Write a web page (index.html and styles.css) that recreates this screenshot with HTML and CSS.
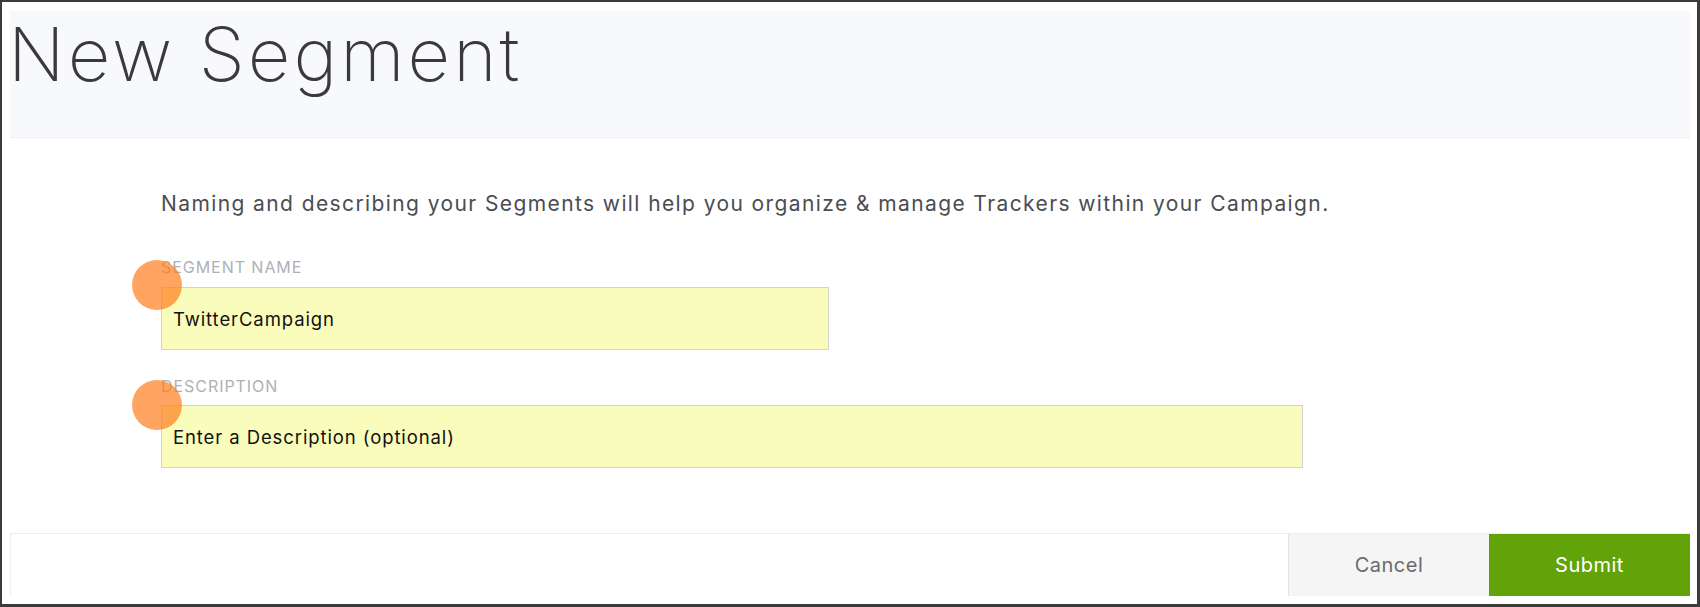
FILE: index.html
```html
<!DOCTYPE html>
<html lang="en">
<head>
<meta charset="utf-8">
<title>New Segment</title>
<link rel="stylesheet" href="styles.css">
</head>
<body>
<div class="frame">
  <header class="page-header">
    <h1 class="title">New Segment</h1>
  </header>
  <main class="content">
    <p class="intro">Naming and describing your Segments will help you organize &amp; manage Trackers within your Campaign.</p>
    <div class="field field-name">
      <label class="field-label" for="seg-name">SEGMENT NAME</label>
      <input class="field-input" id="seg-name" type="text" value="TwitterCampaign">
      <span class="marker"></span>
    </div>
    <div class="field field-desc">
      <label class="field-label" for="seg-desc">DESCRIPTION</label>
      <input class="field-input wide" id="seg-desc" type="text" value="Enter a Description (optional)">
      <span class="marker"></span>
    </div>
  </main>
  <footer class="page-footer">
    <button class="btn btn-cancel" type="button">Cancel</button>
    <button class="btn btn-submit" type="button">Submit</button>
  </footer>
</div>
</body>
</html>
```

FILE: styles.css
```css
html, body {
  margin: 0;
  padding: 0;
  background: #ffffff;
}

.frame {
  box-sizing: border-box;
  width: 1700px;
  height: 607px;
  border-style: solid;
  border-color: #3c3c3c;
  border-width: 2px 3px 3px 2px;
  padding: 9px 7px 8px 8px;
  display: flex;
  flex-direction: column;
  background: #ffffff;
  font-family: Inter, "Liberation Sans", sans-serif;
}

.page-header {
  box-sizing: border-box;
  height: 127px;
  background: #f8f9fd;
  border-bottom: 1px solid #eef0f3;
  padding: 6px 0 0 0;
}

.title {
  margin: 0 0 0 -2px;
  font-family: Inter, "Liberation Sans", sans-serif;
  font-weight: 250;
  font-size: 74px;
  line-height: 74px;
  color: #3a3a3a;
  letter-spacing: 3px;
}

.content {
  flex: 1;
  padding: 54px 0 0 151px;
}

.intro {
  margin: 0;
  font-size: 21px;
  line-height: 24px;
  color: #4a4d52;
  letter-spacing: 1.4px;
}

.field {
  position: relative;
  display: flex;
  flex-direction: column;
  align-items: flex-start;
}

.field-name {
  margin-top: 41px;
}

.field-desc {
  margin-top: 26px;
}

.field-label {
  font-size: 16px;
  line-height: 20px;
  color: #aeb1b5;
  letter-spacing: 0.95px;
  margin-bottom: 10px;
}

.field-desc .field-label {
  margin-bottom: 9px;
}

.field-input {
  box-sizing: border-box;
  width: 668px;
  height: 63px;
  margin: 0;
  padding: 0 0 0 11px;
  border: 1px solid #d3d3d3;
  background: #fafcbc;
  font-family: Inter, "Liberation Sans", sans-serif;
  font-size: 18.5px;
  letter-spacing: 0.9px;
  color: #111111;
  outline: none;
}

.field-input.wide {
  width: 1142px;
  height: 63px;
}

.marker {
  position: absolute;
  left: -29px;
  top: 3px;
  width: 50px;
  height: 50px;
  border-radius: 50%;
  background: rgba(255, 125, 30, 0.7);
  pointer-events: none;
}

.field-desc .marker {
  top: 4px;
}

.page-footer {
  box-sizing: border-box;
  height: 63px;
  margin: 0;
  border-top: 1px solid #ecedf1;
  border-left: 1px solid #f0f0f3;
  display: flex;
  justify-content: flex-end;
}

.btn {
  width: 201px;
  height: 100%;
  margin: 0;
  border: none;
  font-family: Inter, "Liberation Sans", sans-serif;
  font-size: 20px;
  letter-spacing: 0.5px;
  cursor: pointer;
}

.btn-cancel {
  background: #f5f5f5;
  color: #6a6a6a;
  border-left: 1px solid #e2e2e2;
}

.btn-submit {
  background: #62a30a;
  color: #ffffff;
}
```
